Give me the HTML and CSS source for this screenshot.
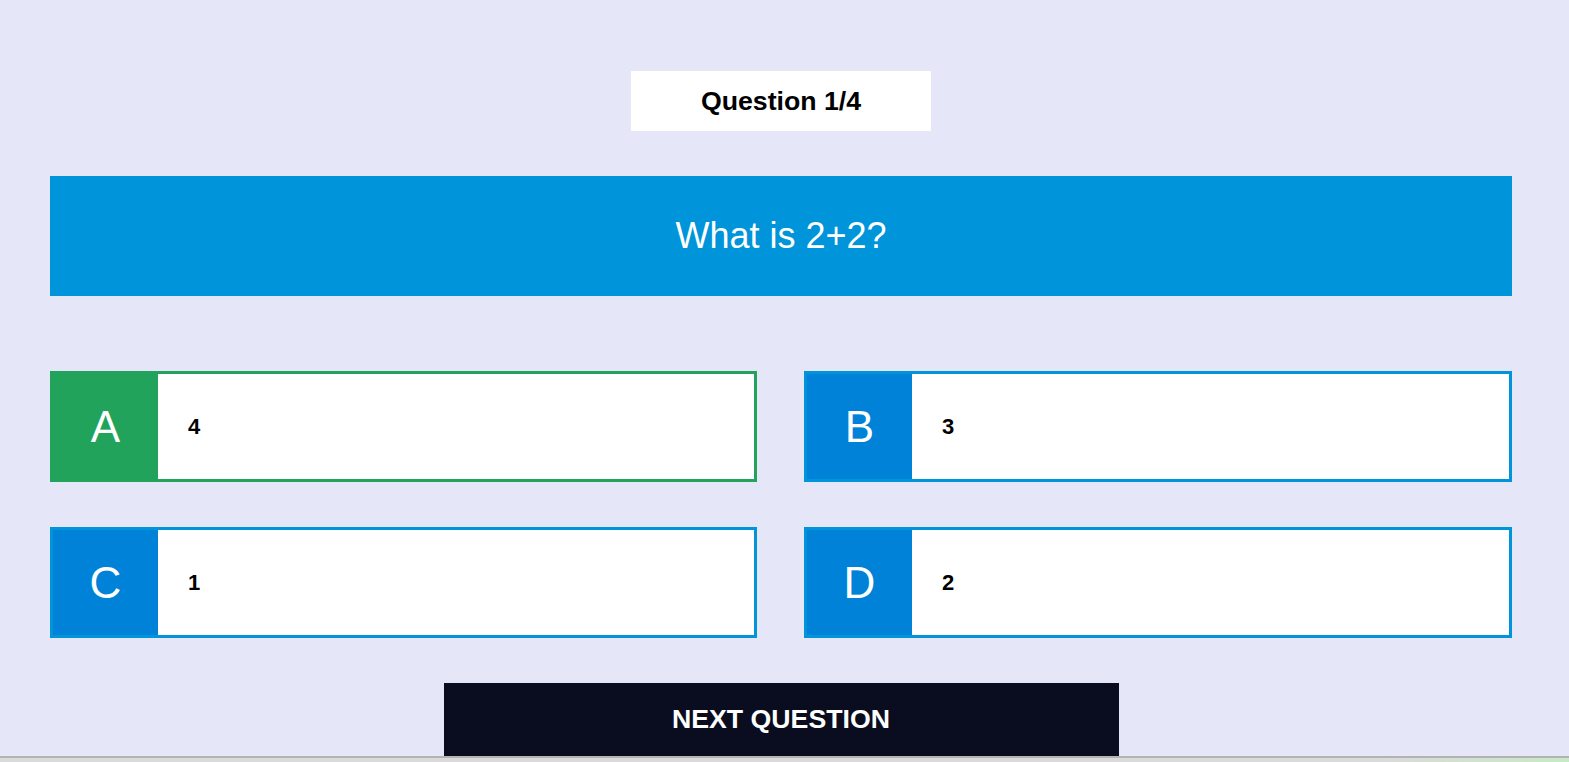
FILE: index.html
```html
<!DOCTYPE html>
<html lang="en">
<head>
<meta charset="utf-8">
<title>Quiz</title>
<link rel="stylesheet" href="styles.css">
</head>
<body>
<main class="quiz">
  <div class="counter">Question 1/4</div>
  <div class="question">What is 2+2?</div>
  <div class="answers">
    <div class="answer correct"><span class="letter">A</span><span class="text">4</span></div>
    <div class="answer"><span class="letter">B</span><span class="text">3</span></div>
    <div class="answer"><span class="letter">C</span><span class="text">1</span></div>
    <div class="answer"><span class="letter">D</span><span class="text">2</span></div>
  </div>
  <button class="next">NEXT QUESTION</button>
</main>
<div class="bottom-bar"></div>
</body>
</html>
```
FILE: styles.css
```css
html, body {
  margin: 0;
  padding: 0;
  height: 100%;
  overflow: hidden;
  background: #e6e6f9;
  font-family: "Liberation Sans", Arial, sans-serif;
}
.quiz {
  width: 1462px;
  margin-left: 50px;
  padding-top: 71px;
  display: flex;
  flex-direction: column;
  align-items: center;
}
.counter {
  width: 300px;
  height: 60px;
  background: #fff;
  display: flex;
  align-items: center;
  justify-content: center;
  font-weight: bold;
  font-size: 26.7px;
  color: #000;
}
.question {
  margin-top: 45px;
  align-self: stretch;
  height: 120px;
  background: #0094da;
  color: #fff;
  font-size: 36px;
  display: flex;
  align-items: center;
  justify-content: center;
}
.answers {
  margin-top: 75px;
  align-self: stretch;
  display: grid;
  grid-template-columns: 707px 1fr;
  column-gap: 47px;
  row-gap: 45px;
}
.answer {
  height: 111px;
  box-sizing: border-box;
  border: 3px solid #0094da;
  background: #fff;
  display: flex;
  align-items: center;
}
.letter {
  width: 105px;
  height: 105px;
  background: #0082d8;
  color: #fff;
  font-size: 44px;
  display: flex;
  align-items: center;
  justify-content: center;
}
.answer.correct {
  border-color: #21a35b;
}
.answer.correct .letter {
  background: #21a35b;
}
.text {
  padding-left: 30px;
  font-weight: bold;
  font-size: 22px;
  color: #000;
}
.next {
  margin-top: 45px;
  width: 675px;
  height: 80px;
  border: none;
  background: #0a0d20;
  color: #fff;
  font-family: "Liberation Sans", Arial, sans-serif;
  font-weight: bold;
  font-size: 26.7px;
  padding: 0 0 7px 0;
}
.bottom-bar {
  position: fixed;
  left: 0;
  right: 0;
  bottom: 0;
  height: 4px;
  border-top: 2px solid #b3b3b3;
  background: linear-gradient(to right, #dadada 0%, #dadada 88%, #c6eac6 100%);
}
```
